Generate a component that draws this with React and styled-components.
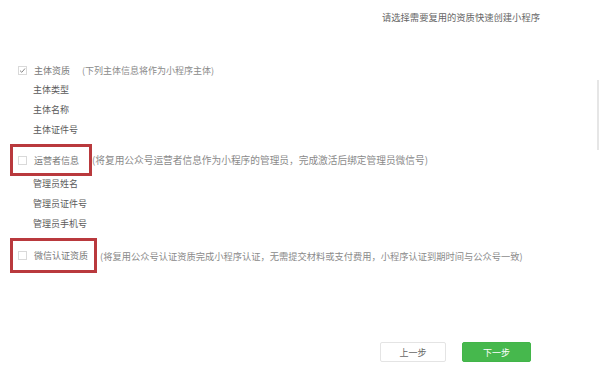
import React from "react";
import styled, { createGlobalStyle } from "styled-components";

const Global = createGlobalStyle`
  html, body { margin: 0; padding: 0; background: #fff; }
  body { font-family: "Noto Sans CJK SC", "Noto Sans", sans-serif; }
`;

const Page = styled.div`
  position: relative;
  width: 600px;
  height: 372px;
  background: #fff;
  overflow: hidden;
  display: flex;
  flex-direction: column;
  font-size: 9px;
`;

const Header = styled.div`
  height: 34px;
  display: flex;
  align-items: center;
  justify-content: flex-end;
  padding-right: 60px;
  font-size: 9.3px;
  color: #666;
`;

const Content = styled.div`
  padding: 26px 0 0 10px;
  display: flex;
  flex-direction: column;
`;

const Row = styled.div`
  display: flex;
  align-items: center;
  height: 20px;
  padding-left: 8px;
  font-size: 9px;
`;

const Box = styled.span`
  width: 7px;
  height: 7px;
  border: 1px solid #d9d9d9;
  background: #fff;
  display: inline-flex;
  align-items: center;
  justify-content: center;
  margin-right: 7px;
  flex: none;
`;

const Label = styled.span`
  color: #777;
  white-space: nowrap;
  font-size: 9px;
`;

const Note = styled.span`
  color: #8a8a8a;
  white-space: nowrap;
  font-size: ${(p) => p.$size || 9}px;
  margin-left: ${(p) => p.$gap}px;
`;

const SubList = styled.div`
  display: flex;
  flex-direction: column;
  padding-left: 23px;
`;

const SubItem = styled.div`
  height: 20px;
  line-height: 20px;
  font-size: 9px;
  color: #5a5a5a;
`;

const Marked = styled.div`
  display: flex;
  align-items: center;
  margin-top: 4px;
  margin-bottom: ${(p) => p.$mb}px;
`;

const RedFrame = styled.div`
  display: flex;
  align-items: center;
  height: ${(p) => p.$h}px;
  box-sizing: border-box;
  border: 3px solid #b9393d;
  padding: 0 ${(p) => p.$pr}px 0 5px;
  font-size: 9px;
`;

const Footer = styled.div`
  margin-top: auto;
  margin-bottom: 10px;
  display: flex;
  justify-content: flex-end;
  gap: 16px;
  padding-right: 69px;
`;

const Button = styled.button`
  width: ${(p) => p.$w}px;
  height: 20px;
  box-sizing: border-box;
  border: 1px solid ${(p) => (p.$primary ? "#42b549" : "#e4e4e4")};
  background: ${(p) => (p.$primary ? "#46b84d" : "#fff")};
  color: ${(p) => (p.$primary ? "#fff" : "#666")};
  font-family: inherit;
  font-size: 9px;
  border-radius: 2px;
  padding: 0;
  cursor: pointer;
`;

const Scroll = styled.div`
  position: absolute;
  right: 1px;
  top: 80px;
  width: 2px;
  height: 70px;
  background: #e6e6e6;
`;

const Check = () => (
  <svg width="7" height="7" viewBox="0 0 7 7">
    <path d="M1 3.6 L2.8 5.3 L6 1.5" fill="none" stroke="#888" strokeWidth="1" />
  </svg>
);

export default function App() {
  return (
    <>
      <Global />
      <Page>
        <Header>请选择需要复用的资质快速创建小程序</Header>
        <Content>
          <Row>
            <Box>
              <Check />
            </Box>
            <Label>主体资质</Label>
            <Note $gap={12}>(下列主体信息将作为小程序主体)</Note>
          </Row>
          <SubList>
            <SubItem>主体类型</SubItem>
            <SubItem>主体名称</SubItem>
            <SubItem>主体证件号</SubItem>
          </SubList>
          <Marked $mb={-2}>
            <RedFrame $h={32} $pr={10}>
              <Box />
              <Label>运营者信息</Label>
            </RedFrame>
            <Note $gap={0} $size={9.7}>(将复用公众号运营者信息作为小程序的管理员，完成激活后绑定管理员微信号)</Note>
          </Marked>
          <SubList>
            <SubItem>管理员姓名</SubItem>
            <SubItem>管理员证件号</SubItem>
            <SubItem>管理员手机号</SubItem>
          </SubList>
          <Marked $mb={0}>
            <RedFrame $h={35} $pr={6}>
              <Box />
              <Label>微信认证资质</Label>
            </RedFrame>
            <Note $gap={3} $size={9.25}>(将复用公众号认证资质完成小程序认证，无需提交材料或支付费用，小程序认证到期时间与公众号一致)</Note>
          </Marked>
        </Content>
        <Footer>
          <Button $w={66}>上一步</Button>
          <Button $w={69} $primary>下一步</Button>
        </Footer>
        <Scroll />
      </Page>
    </>
  );
}
